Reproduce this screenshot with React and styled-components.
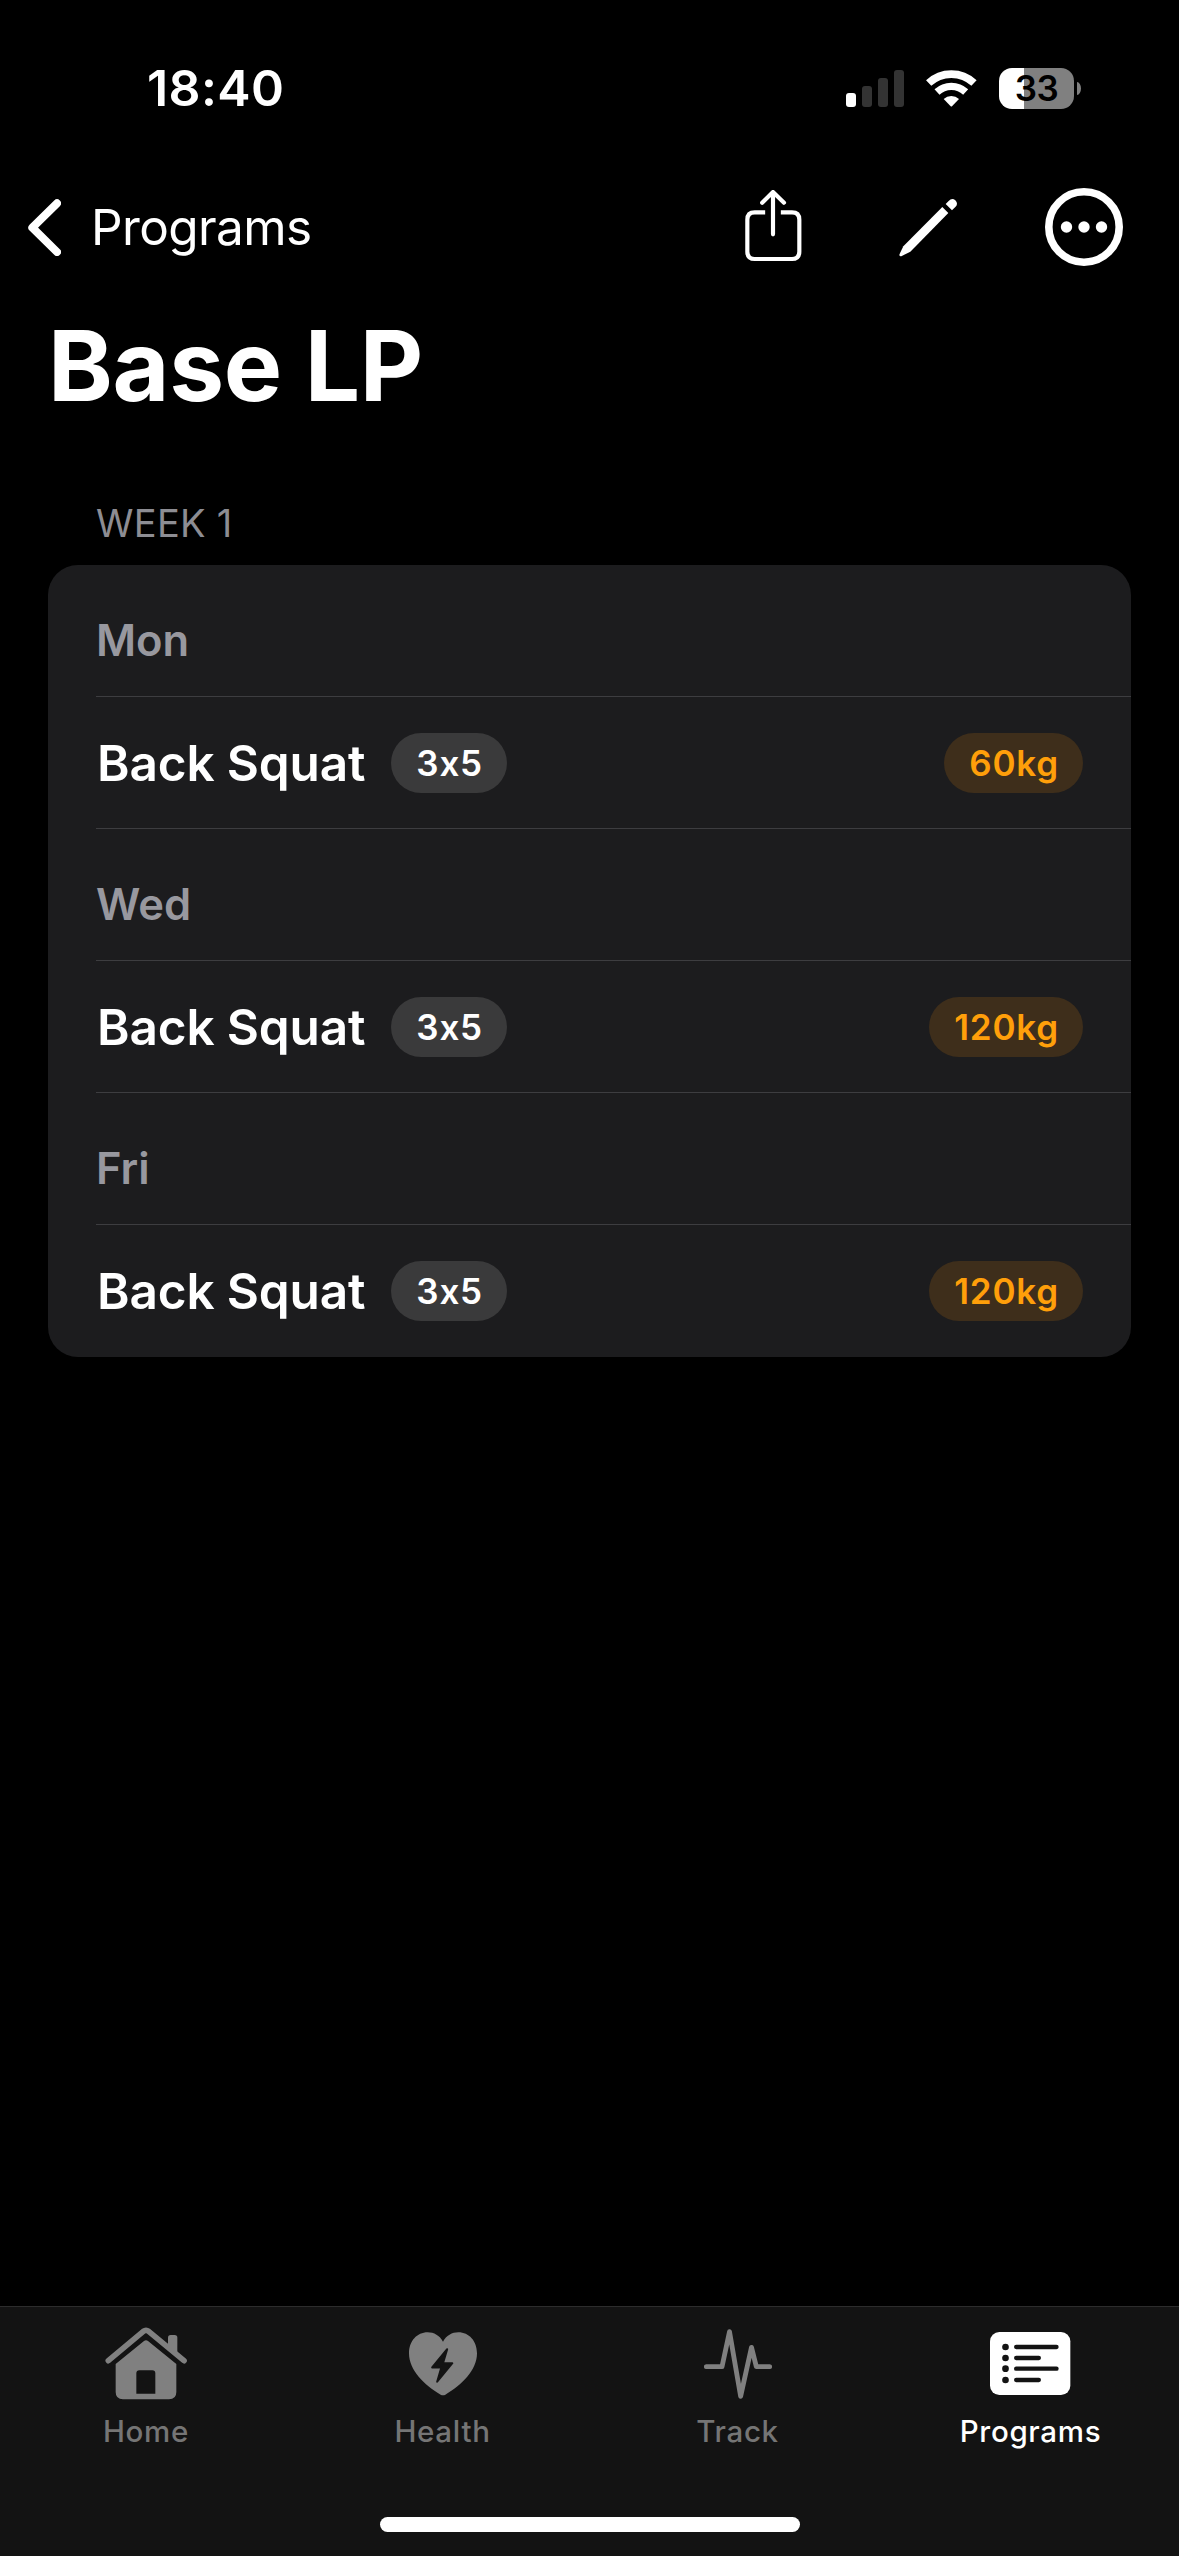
import React from "react";
import styled, { createGlobalStyle } from "styled-components";

const GlobalStyle = createGlobalStyle`
  html, body { margin: 0; padding: 0; background: #000; }
  *, *::before, *::after { box-sizing: border-box; }
`;

const Screen = styled.div`
  width: 1179px;
  height: 2556px;
  display: flex;
  flex-direction: column;
  background: #000;
  color: #fff;
  font-family: Inter, "Liberation Sans", sans-serif;
  white-space: nowrap;
  overflow: hidden;
`;

const StatusBar = styled.header`
  height: 176px;
  flex: none;
  display: flex;
  align-items: center;
  justify-content: space-between;
  padding: 0 98px 0 147px;
`;

const Time = styled.time`
  font-size: 50px;
  font-weight: 600;
  line-height: 60px;
  letter-spacing: 0.4px;
`;

const StatusIcons = styled.div`
  display: flex;
  align-items: center;
`;

const Signal = styled.div`
  display: flex;
  align-items: flex-end;
  gap: 6px;
  margin-right: 22px;
`;

const SignalBar = styled.span`
  width: 10px;
  height: ${(p) => p.$height}px;
  border-radius: 3px;
  background: ${(p) => (p.$on ? "#fff" : "#333")};
`;

const Battery = styled.div`
  display: flex;
  align-items: center;
  gap: 3px;
  margin-left: 22px;
`;

const BatteryBody = styled.div`
  width: 75px;
  height: 41px;
  border-radius: 13px;
  display: flex;
  align-items: center;
  justify-content: center;
  background: linear-gradient(to right, #fff 33.3%, #808080 33.3%);
  color: #000;
  font-size: 35px;
  font-weight: 600;
  line-height: 41px;
  letter-spacing: -0.4px;
`;

const BatteryTip = styled.span`
  width: 4px;
  height: 13px;
  border-radius: 0 4px 4px 0 / 0 6.5px 6.5px 0;
  background: #808080;
`;

const NavBar = styled.nav`
  height: 102px;
  flex: none;
  display: flex;
  align-items: center;
  justify-content: space-between;
  padding: 0 56px 0 28px;
`;

const BackButton = styled.a`
  display: flex;
  align-items: center;
  gap: 30px;
  font-size: 49.5px;
  font-weight: 400;
  line-height: 60px;
  letter-spacing: -0.6px;
`;

const NavActions = styled.div`
  display: flex;
  align-items: center;
`;

const Action = styled.span`
  display: flex;
  margin-left: ${(p) => p.$gap || 0}px;
`;

const Title = styled.h1`
  flex: none;
  margin: 0;
  padding-left: 48px;
  height: 174px;
  line-height: 175px;
  font-size: 98px;
  font-weight: 700;
  letter-spacing: -0.3px;
`;

const Content = styled.main`
  flex: 1;
  padding: 0 48px;
`;

const SectionHeader = styled.h2`
  margin: 0;
  height: 113px;
  padding: 47px 0 18px 48px;
  font-size: 38px;
  line-height: 48px;
  font-weight: 400;
  letter-spacing: 0.3px;
  color: #8d8d93;
`;

const Card = styled.section`
  background: #1c1c1e;
  border-radius: 30px;
  padding-left: 48px;
`;

const Row = styled.div`
  height: 132px;
  display: flex;
  align-items: center;
  padding-right: 48px;
  border-bottom: 1px solid #3d3d40;
  &:last-child { border-bottom-color: transparent; }
`;

const DayRow = styled(Row)`
  padding-top: 19px;
  font-size: 43.5px;
  font-weight: 600;
  color: #98989f;
`;

const Exercise = styled.span`
  font-size: 49.5px;
  font-weight: 600;
  letter-spacing: -0.15px;
  padding-left: 1px;
  margin-right: 26px;
`;

const Chip = styled.span`
  height: 60px;
  line-height: 60px;
  padding: 0 24px 0 25px;
  border-radius: 30px;
  font-size: 35px;
  font-weight: 600;
  letter-spacing: 0.8px;
  color: ${(p) => (p.$accent ? "#ff9f0a" : "#fff")};
  background: ${(p) => (p.$accent ? "#3e2e1b" : "#3a3a3b")};
  margin-left: ${(p) => (p.$accent ? "auto" : "0")};
`;

const TabBar = styled.footer`
  height: 250px;
  flex: none;
  display: flex;
  flex-direction: column;
  align-items: center;
  border-top: 1px solid #2c2c2c;
  background: #131313;
`;

const Tabs = styled.div`
  width: 100%;
  height: 210px;
  padding-top: 20px;
  display: grid;
  grid-template-columns: 292px 301px 289px 297px;
`;

const Tab = styled.a`
  display: flex;
  flex-direction: column;
  align-items: center;
  color: ${(p) => (p.$active ? "#fff" : "#757575")};
`;

const TabIcon = styled.span`
  height: 73px;
  display: flex;
  align-items: center;
  color: ${(p) => (p.$active ? "#fff" : "#808080")};
`;

const TabLabel = styled.span`
  margin-top: 13px;
  font-size: 29.5px;
  line-height: 36px;
  font-weight: 500;
  letter-spacing: 0.7px;
`;

const HomeIndicator = styled.span`
  width: 420px;
  height: 15px;
  border-radius: 8px;
  background: #fff;
`;

const WifiIcon = () => (
  <svg width="51" height="38" viewBox="318 55 153 114" fill="none" stroke="#fff">
    <path d="M326 97.2A99.5 99.5 0 0 1 462 97.2" strokeWidth="23" />
    <path d="M351 124A63 63 0 0 1 437 124" strokeWidth="22" />
    <path d="M371 145A34 34 0 0 1 417 145L396 166.500Q394 168 392 166.500Z" fill="#fff" stroke="none" />
  </svg>
);

const ChevronIcon = () => (
  <svg width="33" height="57" viewBox="84 474 99 171" fill="none" stroke="#fff" strokeWidth="24" strokeLinecap="round" strokeLinejoin="round">
    <path d="M171 487L97 560L171 633" />
  </svg>
);

const ShareIcon = () => (
  <svg width="57" height="74" viewBox="75 59 171 222" fill="none" stroke="#fff" strokeWidth="12.500" strokeLinecap="round" strokeLinejoin="round">
    <path d="M135.500 126H104Q82 126 82 148V244Q82 266 104 266H216Q238 266 238 244V148Q238 126 216 126H182.500" strokeLinecap="butt" />
    <path d="M159 192V66M126.500 97L159 65L192 97" />
  </svg>
);

const PencilIcon = () => (
  <svg width="59" height="59" viewBox="537 86 177 177" fill="#fff">
    <path d="M667 113L685 131L571 247L544 260.500Q537 262 538.500 255L550 231Z" />
    <path d="M677 104L686 95Q696 84 706 93Q716 103 706 113L696 123Z" />
  </svg>
);

const MoreIcon = () => (
  <svg width="78" height="78" viewBox="0 0 78 78">
    <circle cx="39" cy="39" r="35.200" fill="none" stroke="#fff" strokeWidth="7.600" />
    <circle cx="21.500" cy="39" r="5.700" fill="#fff" />
    <circle cx="39" cy="39" r="5.700" fill="#fff" />
    <circle cx="56.500" cy="39" r="5.700" fill="#fff" />
  </svg>
);

const HomeIcon = () => (
  <svg width="82" height="73" viewBox="74 110 246 219" fill="currentColor">
    <path d="M84 211L189 123Q197 117 205 123L311 211" fill="none" stroke="currentColor" strokeWidth="17" strokeLinecap="round" strokeLinejoin="round" />
    <path d="M263 166V142Q263 134 271 134H283Q291 134 291 142V190Z" />
    <path fillRule="evenodd" d="M106 221L191 152Q197 147 203 152L288 221V305Q288 327 266 327H128Q106 327 106 305ZM168 310H225V249Q225 240 216 240H177Q168 240 168 249Z" />
  </svg>
);

const HeartIcon = () => (
  <svg width="68" height="64" viewBox="117 125 204 192" fill="currentColor">
    <path d="M219 154C209 136 192 126 173 126C141 126 117 152 117 189C117 240 163 284 212 313Q219 317 226 313C275 284 321 240 321 189C321 152 297 126 265 126C246 126 229 136 219 154Z" />
    <path d="M231.500 176.500L186.500 231.500H214L201.500 274L247 218.500H219Z" fill="#131313" stroke="#131313" strokeWidth="6" strokeLinejoin="round" />
  </svg>
);

const PulseIcon = () => (
  <svg width="68" height="70" viewBox="99 118 204 210" fill="none" stroke="currentColor" strokeWidth="14.500" strokeLinecap="round" strokeLinejoin="round">
    <path d="M106 231H153L175.500 126L209 320L241.500 173L256 231H296" />
  </svg>
);

const ListIcon = () => (
  <svg width="81" height="63" viewBox="150 123 243 189">
    <rect x="150" y="123" width="241" height="189" rx="28" fill="#fff" />
    {[168, 201, 233, 267].map((y, i) => (
      <g key={y} fill="#131313">
        <circle cx="196.500" cy={y} r="10" />
        <rect x="222" y={y - 6.5} width={i % 2 ? 81 : 134} height="13" rx="6.500" />
      </g>
    ))}
  </svg>
);

const days = [
  { day: "Mon", name: "Back Squat", sets: "3x5", weight: "60kg" },
  { day: "Wed", name: "Back Squat", sets: "3x5", weight: "120kg" },
  { day: "Fri", name: "Back Squat", sets: "3x5", weight: "120kg" },
];

const tabs = [
  { label: "Home", Icon: HomeIcon },
  { label: "Health", Icon: HeartIcon },
  { label: "Track", Icon: PulseIcon },
  { label: "Programs", Icon: ListIcon, active: true },
];

export default function App() {
  return (
    <Screen>
      <GlobalStyle />
      <StatusBar>
        <Time>18:40</Time>
        <StatusIcons>
          <Signal>
            <SignalBar $height={14} $on />
            <SignalBar $height={21} />
            <SignalBar $height={29} />
            <SignalBar $height={37} />
          </Signal>
          <WifiIcon />
          <Battery>
            <BatteryBody>33</BatteryBody>
            <BatteryTip />
          </Battery>
        </StatusIcons>
      </StatusBar>
      <NavBar>
        <BackButton>
          <ChevronIcon />
          Programs
        </BackButton>
        <NavActions>
          <Action><ShareIcon /></Action>
          <Action $gap={97}><PencilIcon /></Action>
          <Action $gap={87}><MoreIcon /></Action>
        </NavActions>
      </NavBar>
      <Title>Base LP</Title>
      <Content>
        <SectionHeader>WEEK 1</SectionHeader>
        <Card>
          {days.map((d) => (
            <React.Fragment key={d.day}>
              <DayRow>{d.day}</DayRow>
              <Row>
                <Exercise>{d.name}</Exercise>
                <Chip>{d.sets}</Chip>
                <Chip $accent>{d.weight}</Chip>
              </Row>
            </React.Fragment>
          ))}
        </Card>
      </Content>
      <TabBar>
        <Tabs>
          {tabs.map(({ label, Icon, active }) => (
            <Tab key={label} $active={active}>
              <TabIcon $active={active}><Icon /></TabIcon>
              <TabLabel>{label}</TabLabel>
            </Tab>
          ))}
        </Tabs>
        <HomeIndicator />
      </TabBar>
    </Screen>
  );
}
